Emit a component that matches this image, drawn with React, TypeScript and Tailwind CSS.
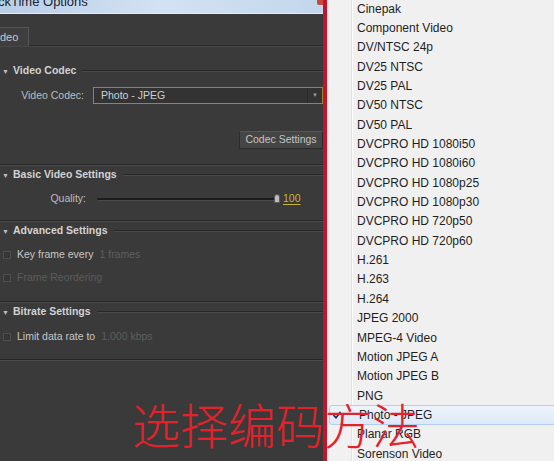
import React from 'react';

const CODECS = [
  'Cinepak',
  'Component Video',
  'DV/NTSC 24p',
  'DV25 NTSC',
  'DV25 PAL',
  'DV50 NTSC',
  'DV50 PAL',
  'DVCPRO HD 1080i50',
  'DVCPRO HD 1080i60',
  'DVCPRO HD 1080p25',
  'DVCPRO HD 1080p30',
  'DVCPRO HD 720p50',
  'DVCPRO HD 720p60',
  'H.261',
  'H.263',
  'H.264',
  'JPEG 2000',
  'MPEG-4 Video',
  'Motion JPEG A',
  'Motion JPEG B',
  'PNG',
  'Photo - JPEG',
  'Planar RGB',
  'Sorenson Video',
];

const SELECTED = 'Photo - JPEG';
const ROW = 19.35;

// Section header: triangle + bold title + etched rule to the right
const SectionHeader: React.FC<{ title: string; className?: string }> = ({ title, className }) => (
  <div className={`flex items-center h-[14px] ${className ?? ''}`}>
    <span className="w-[13px] pl-[2px] text-[7px] leading-none text-[#bdbdbd]">▼</span>
    <span className="font-bold text-[10.5px] text-[#d2d2d2] whitespace-nowrap">{title}</span>
    <div className="flex-1 ml-[6px] flex flex-col">
      <div className="h-px bg-[#282828]" />
      <div className="h-px bg-[#4a4a4a]" />
    </div>
  </div>
);

const Separator: React.FC<{ className?: string }> = ({ className }) => (
  <div className={`flex flex-col ${className ?? ''}`}>
    <div className="h-px bg-[#262626]" />
    <div className="h-px bg-[#4b4b4b]" />
  </div>
);

const Checkbox: React.FC = () => (
  <span className="ml-[3px] w-[8px] h-[8px] border border-[#4e4e4e] bg-[#363636] shrink-0" />
);

export default function App() {
  return (
    <div
      className="relative w-[554px] h-[461px] overflow-hidden flex bg-[#3a3a3a]"
      style={{ fontFamily: '"Liberation Sans", Arial, sans-serif' }}
    >
      {/* Left: QuickTime Options dialog */}
      <div className="w-[323px] shrink-0 flex flex-col">
        {/* Title bar */}
        <div className="h-[14px] shrink-0 relative overflow-hidden bg-gradient-to-r from-[#b8cee6] via-[#d3e2f2] to-[#c2d6ec] border-b border-[#e4edf6]">
          <div className="-mt-[6px] -ml-[2px] text-[13px] leading-[16px] text-[#1b2430] whitespace-nowrap">
            ckTime Options
          </div>
          <div className="absolute right-0 top-0 w-[6px] h-[5px] rounded-bl-[2px] bg-[#c8473e]" />
        </div>

        {/* Body */}
        <div className="flex-1 flex flex-col bg-[#3a3a3a] text-[10.5px] text-[#c6c6c6]">
          {/* Tabs */}
          <div className="h-[32px] flex items-end border-b border-[#2a2a2a]">
            <div className="h-[19px] w-[29px] bg-[#3e3e3e] border-t border-r border-[#545454] flex items-center text-[11px] text-[#c8c8c8] -mb-px">
              deo
            </div>
          </div>
          <div className="h-px bg-[#474747]" />

          {/* Video Codec */}
          <SectionHeader title="Video Codec" className="mt-[17px]" />
          <div className="mt-[9px] flex items-center h-[17px]">
            <span className="w-[86px] pr-[2px] text-right text-[#bdbdbd]">Video Codec:</span>
            <div className="ml-[7px] flex-1 h-[17px] flex border border-[#9a8830] bg-[#333333]">
              <span className="flex-1 pl-[7px] leading-[15px] text-[#cfcfcf]">Photo - JPEG</span>
              <span className="w-[15px] border-l border-[#2a2a2a] flex items-center justify-center text-[6px] text-[#9a9a9a]">▼</span>
            </div>
          </div>
          <div className="mt-[27px] flex justify-end">
            <div className="w-[84px] h-[18px] flex items-center justify-center bg-[#454545] border border-[#2c2c2c] border-t-[#575757] text-[#c4c4c4]">
              Codec Settings
            </div>
          </div>
          <Separator className="mt-[15px]" />

          {/* Basic Video Settings */}
          <SectionHeader title="Basic Video Settings" className="mt-[2px]" />
          <div className="mt-[10px] flex items-center h-[14px]">
            <span className="w-[86px] text-right text-[#bdbdbd]">Quality:</span>
            <div className="ml-[11px] w-[183px] relative h-[10px] flex items-center">
              <div className="w-full h-[3px] rounded-full bg-[#1c1c1c] border-b border-[#4a4a4a]" />
              <div className="absolute right-0 top-0 w-[6px] h-[9px] rounded-t-[3px] bg-[#bcbcbc] border border-[#5a5a5a]" />
            </div>
            <span className="ml-[3px] text-[#c9b52a] underline underline-offset-2 decoration-[#c9b52a]">100</span>
          </div>
          <Separator className="mt-[14px]" />

          {/* Advanced Settings */}
          <SectionHeader title="Advanced Settings" className="mt-[2px]" />
          <div className="mt-[10px] flex items-center h-[14px] gap-[6px]">
            <Checkbox />
            <span className="text-[#c6c6c6]">Key frame every</span>
            <span className="text-[#5e5e5e]">1 frames</span>
          </div>
          <div className="mt-[9px] flex items-center h-[14px] gap-[6px]">
            <Checkbox />
            <span className="text-[#5a5a5a]">Frame Reordering</span>
          </div>
          <Separator className="mt-[16px]" />

          {/* Bitrate Settings */}
          <SectionHeader title="Bitrate Settings" className="mt-[2px]" />
          <div className="mt-[11px] flex items-center h-[14px] gap-[6px]">
            <Checkbox />
            <span className="text-[#c6c6c6]">Limit data rate to</span>
            <span className="text-[#5e5e5e]">1,000 kbps</span>
          </div>
          <Separator className="mt-[15px]" />
        </div>
      </div>

      {/* Red window edge */}
      <div className="w-[4px] shrink-0 bg-[#c4132c]" />

      {/* Codec drop-down menu */}
      <div className="flex-1 relative bg-[#f0f0f0] flex">
        <div className="w-[24px] shrink-0 bg-[#f1f1f1]" />
        <div className="w-px bg-[#e2e3e3]" />
        <div className="w-px bg-[#fdfdfd]" />
        <div className="flex-1 flex flex-col -mt-[1px]">
          {CODECS.map((c) => (
            <div key={c} className="h-[19.35px] shrink-0 flex items-center pl-[4px] text-[12px] text-[#1e1e1e] whitespace-nowrap">
              {c}
            </div>
          ))}
        </div>
        {/* Highlighted selection row */}
        <div
          className="absolute left-[2px] -right-[2px] h-[20px] rounded-[3px] border border-[#b3cdee] bg-gradient-to-b from-[#eef4fc] to-[#dde8f8] flex items-center"
          style={{ top: CODECS.indexOf(SELECTED) * ROW - 1 }}
        >
          <svg className="ml-[3px]" width="8" height="8" viewBox="0 0 8 8">
            <path d="M0.5 4 L3 6.8 L7.5 0.8" fill="none" stroke="#1d2a70" strokeWidth="1.6" />
          </svg>
          <span className="ml-[18px] text-[12px] text-[#1e1e1e]">{SELECTED}</span>
        </div>
      </div>

      {/* Red annotation overlay */}
      <div
        className="absolute left-[132px] top-[399px] text-[48px] leading-none font-light text-[#e3222c] whitespace-nowrap pointer-events-none"
        style={{ fontFamily: '"Noto Sans CJK SC", sans-serif' }}
      >
        选择编码方法
      </div>
    </div>
  );
}
